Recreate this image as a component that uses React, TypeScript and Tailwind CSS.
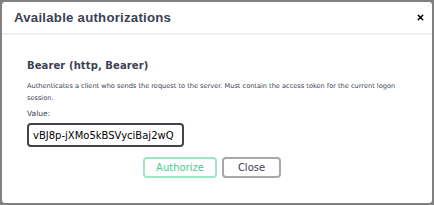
import { X } from 'lucide-react';

export default function App() {
  return (
    <div className="w-[434px] h-[205px] bg-[#808080] pt-[2px] pl-[2px] overflow-hidden font-['DejaVu_Sans',sans-serif] text-[#3b4151]">
      <div className="w-[430px] h-[201px] bg-white rounded-[3px] flex flex-col">
        {/* header */}
        <div className="h-[33px] shrink-0 flex items-center justify-between pl-[12px] pr-[7px] border-b-2 border-[#f0f0f0]">
          <h3 className="font-['Liberation_Sans',sans-serif] font-bold text-[13.2px] tracking-[0.25px]">Available authorizations</h3>
          <X className="w-[9px] h-[9px] text-black" strokeWidth={4} />
        </div>

        {/* body */}
        <div className="px-[25px] pt-[24px] flex flex-col">
          <h4 className="font-bold text-[10px] leading-[14px] tracking-[0.1px]">Bearer (http, Bearer)</h4>
          <p className="mt-[7px] text-[6.6px] leading-[12px]">
            Authenticates a client who sends the request to the server. Must contain the access token for the current logon session.
          </p>
          <label className="mt-[4px] text-[7.5px] leading-[12px]">Value:</label>
          <input
            readOnly
            value="vBJ8p-jXMo5kBSVyciBaj2wQ"
            className="mt-[3px] w-[157px] h-[24px] border-2 border-[#41444e] rounded-[4px] px-[4px] text-[10px] text-black outline-none font-['DejaVu_Sans',sans-serif]"
          />
          <div className="mt-[10px] flex justify-center gap-[5px] pr-[10px]">
            <button className="w-[74px] h-[21px] border-2 border-[#a0e6c4] rounded-[4px] text-[10px] text-[#49cc90]">Authorize</button>
            <button className="w-[59px] h-[21px] border-2 border-[#a8a8a8] rounded-[4px] text-[10px] text-[#3b4151]">Close</button>
          </div>
        </div>
      </div>
    </div>
  );
}
